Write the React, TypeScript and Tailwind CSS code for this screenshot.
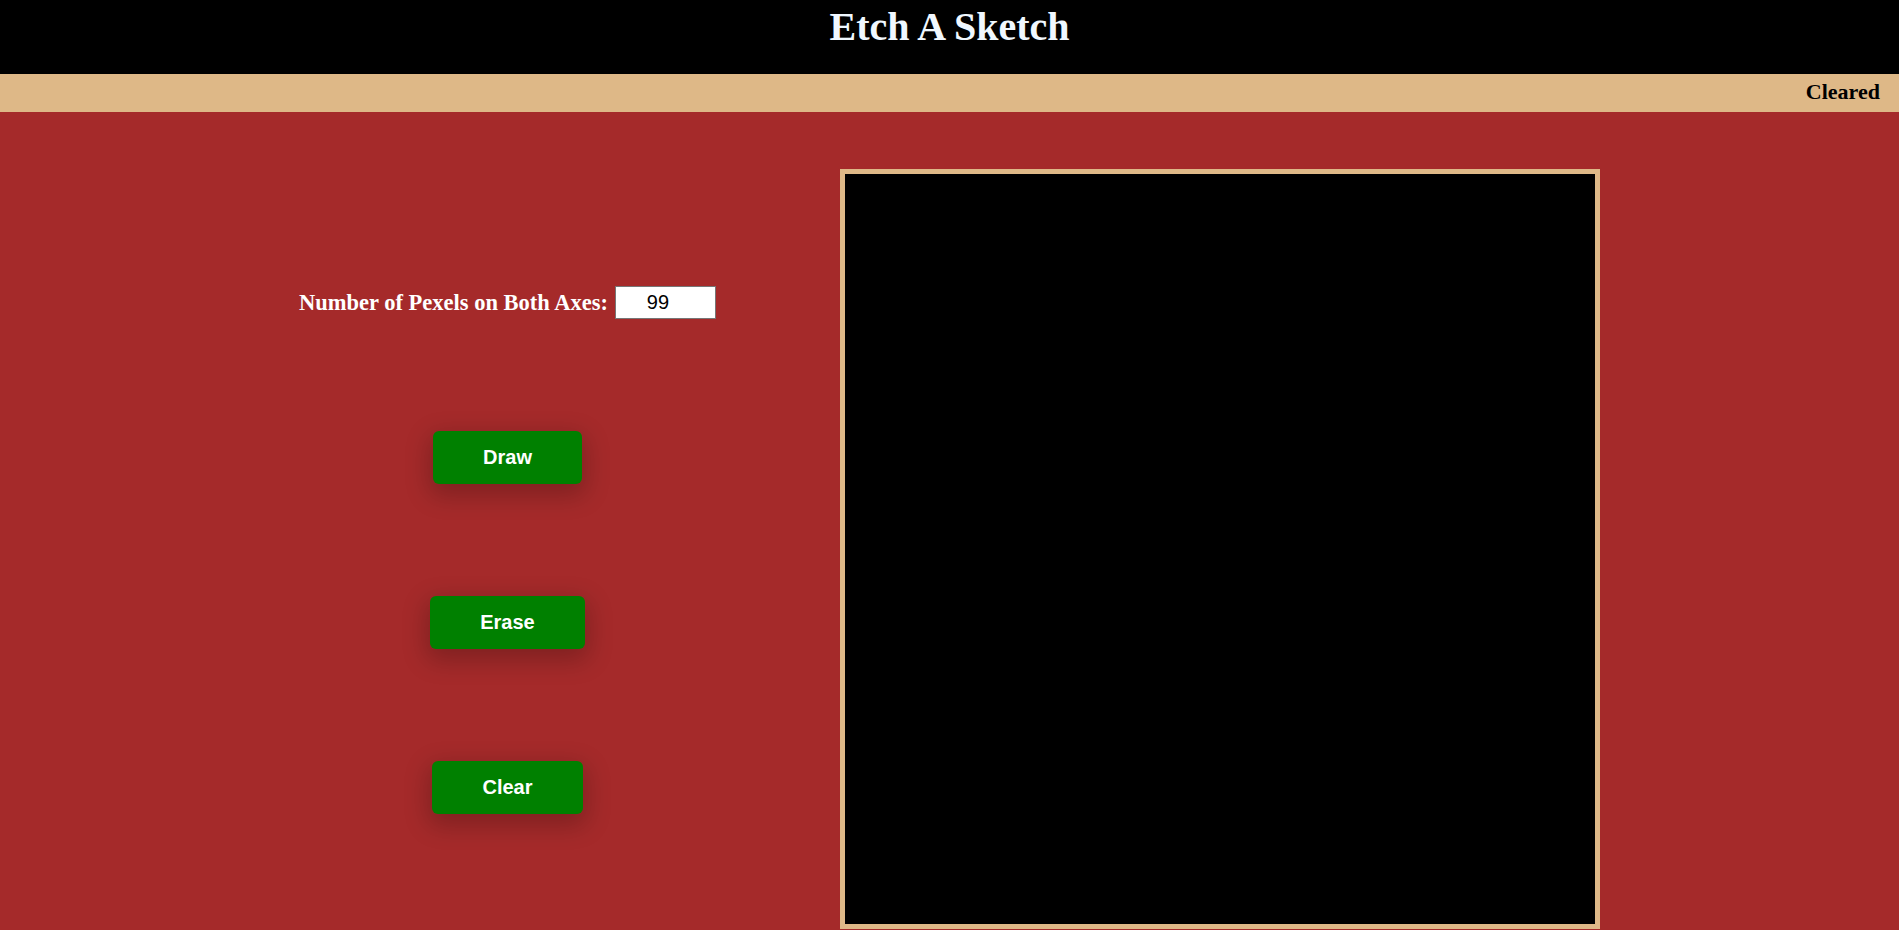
const buttons = ["Draw", "Erase", "Clear"];

export default function App() {
  return (
    <div className="min-h-[930px] bg-[#a52a2a] font-['Liberation_Serif',serif]">
      {/* Header */}
      <header className="h-[74px] bg-black pt-[5px] text-center">
        <h1 className="text-[40px] font-bold leading-[1.107] text-[#f0f8ff]">Etch A Sketch</h1>
      </header>

      {/* Status bar */}
      <div className="h-[38px] bg-[#deb887] pt-[6px] pr-[19px] text-right">
        <span className="text-[22px] font-bold leading-[1.107] text-black">Cleared</span>
      </div>

      {/* Main */}
      <main className="flex pt-[57px]">
        <div className="ml-[300px] flex w-[415px] flex-col items-center gap-[112px] pt-[117px]">
          <div className="flex h-[33px] items-center gap-[7px]">
            <label className="text-[22.5px] font-bold whitespace-nowrap text-white">Number of Pexels on Both Axes:</label>
            <input
              type="number"
              defaultValue={99}
              className="h-[33px] w-[101px] border border-[#767676] bg-white text-center font-['Liberation_Sans',sans-serif] text-[20px] text-black outline-none"
            />
          </div>
          {buttons.map((b) => (
            <button
              key={b}
              className="rounded-[6px] bg-[#008000] px-[50px] py-[15px] font-['Liberation_Sans',sans-serif] text-[20px] leading-[23px] font-bold text-white shadow-[0_8px_24px_4px_rgba(0,0,0,0.22)]"
            >
              {b}
            </button>
          ))}
        </div>

        <div className="ml-[125px] h-[760px] w-[760px] border-[5px] border-[#deb887] bg-black" />
      </main>
    </div>
  );
}
